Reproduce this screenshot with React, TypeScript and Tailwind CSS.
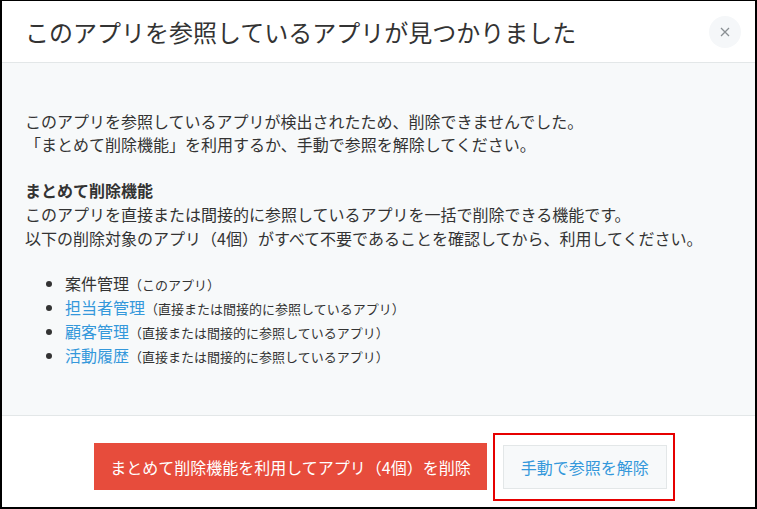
import React from 'react';

interface RefApp {
    name: string;
    note: string;
    self?: boolean;
}

const apps: RefApp[] = [
    { name: '案件管理', note: '（このアプリ）', self: true },
    { name: '担当者管理', note: '（直接または間接的に参照しているアプリ）' },
    { name: '顧客管理', note: '（直接または間接的に参照しているアプリ）' },
    { name: '活動履歴', note: '（直接または間接的に参照しているアプリ）' },
];

const font = { fontFamily: '"Noto Sans CJK JP", "Noto Sans", sans-serif' };

export default function App() {
    return (
        <div
            className="w-[757px] h-[509px] flex flex-col bg-white border-l-2 border-r-2 border-b-2 border-t border-black text-[#333]"
            style={font}
        >
            {/* Header */}
            <div className="h-[62px] shrink-0 flex items-center justify-between pl-[23px] pr-[14px] border-b border-[#e3e7e8]">
                <h1 className="text-[24px] leading-none font-normal tracking-normal">
                    このアプリを参照しているアプリが見つかりました
                </h1>
                <button className="w-[32px] h-[32px] rounded-full bg-[#f5f7f9] flex items-center justify-center text-[#8a8f93]">
                    <svg width="10" height="10" viewBox="0 0 10 10" fill="none" stroke="currentColor" strokeWidth="1.3">
                        <path d="M1 1 L9 9 M9 1 L1 9" />
                    </svg>
                </button>
            </div>

            {/* Body */}
            <div className="flex-1 bg-[#f7f9fa] px-[23px] pt-[47px] text-[16px] leading-[23px]">
                <p>
                    このアプリを参照しているアプリが検出されたため、削除できませんでした。
                    <br />
                    「まとめて削除機能」を利用するか、手動で参照を解除してください。
                </p>
                <p className="mt-[22px] leading-[24px]">
                    <span className="font-bold">まとめて削除機能</span>
                    <br />
                    このアプリを直接または間接的に参照しているアプリを一括で削除できる機能です。
                    <br />
                    以下の削除対象のアプリ（4個）がすべて不要であることを確認してから、利用してください。
                </p>
                <ul className="mt-[21px] pl-[40px] list-disc marker:text-[#333]">
                    {apps.map((app) => (
                        <li key={app.name} className="h-[24px] leading-[24px]">
                            <span className={app.self ? 'text-[#333]' : 'text-[#3498db]'}>{app.name}</span>
                            <span className="text-[13px] leading-none">{app.note}</span>
                        </li>
                    ))}
                </ul>
            </div>

            {/* Footer */}
            <div className="h-[92px] shrink-0 border-t border-[#e3e7e8] flex items-center justify-center gap-[6px] pl-[12px] pt-[10px]">
                <button className="h-[47px] px-[16px] bg-[#e74c3c] text-white text-[16px] leading-none">
                    まとめて削除機能を利用してアプリ（4個）を削除
                </button>
                <div className="border-2 border-[#e60000] pl-[8px] pr-[6px] pt-[10px] pb-[10px]">
                    <button className="h-[44px] px-[17px] bg-[#f7f9fa] border border-[#e3e7e8] text-[#3498db] text-[16px] leading-none">
                        手動で参照を解除
                    </button>
                </div>
            </div>
        </div>
    );
}
